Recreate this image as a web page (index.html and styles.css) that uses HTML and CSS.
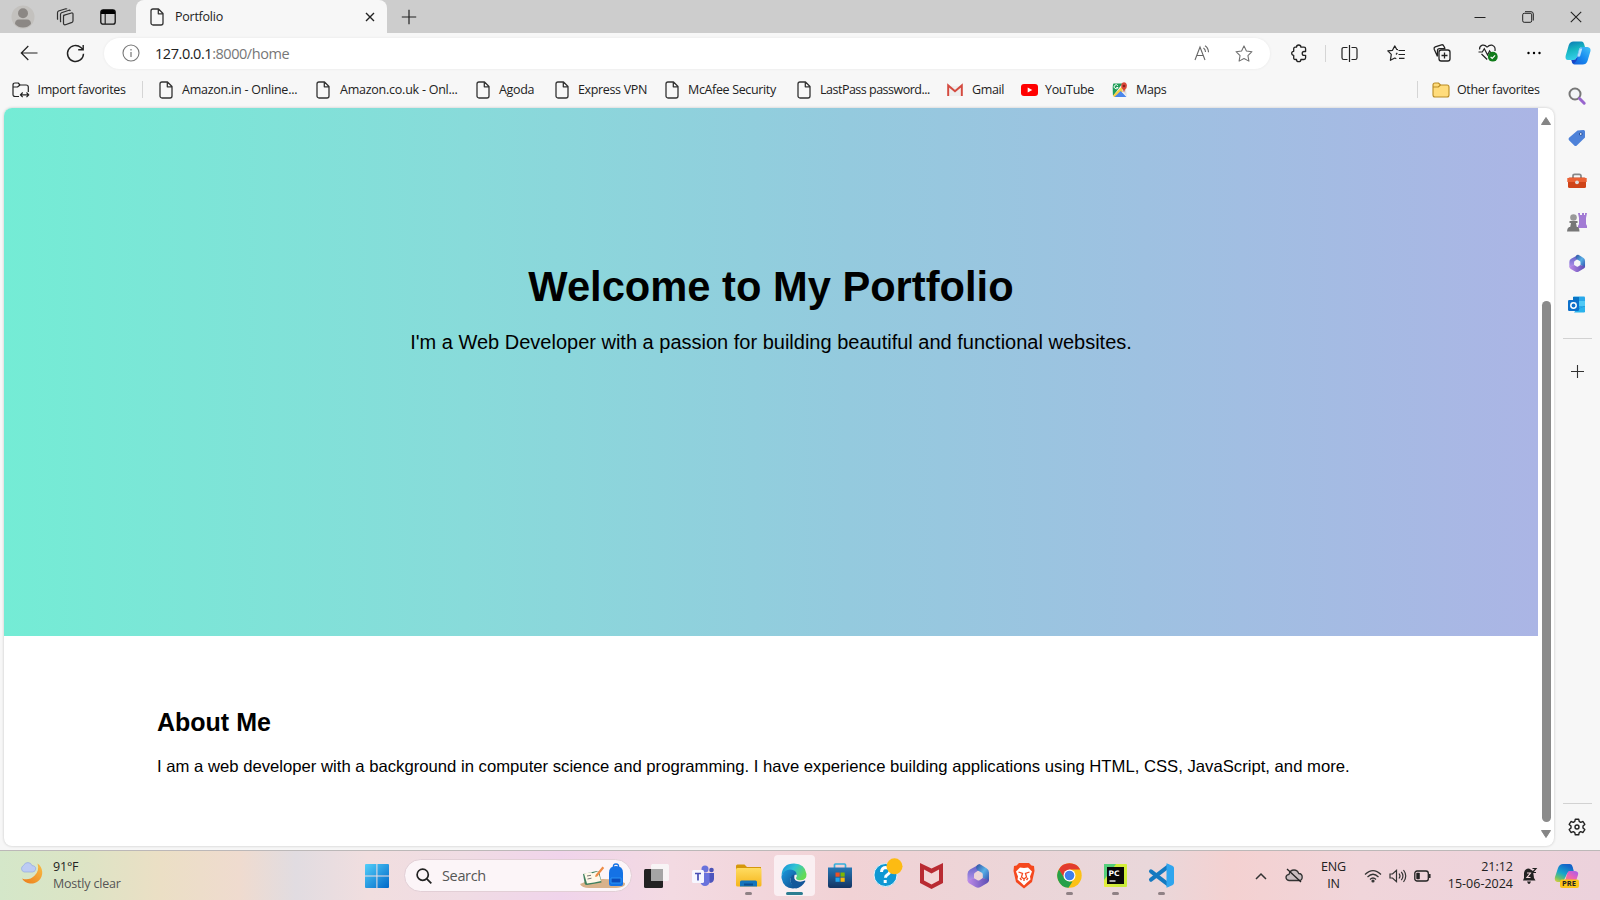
FILE: index.html
```html
<!DOCTYPE html>
<html lang="en">
<head>
<meta charset="utf-8">
<title>Portfolio</title>
<link rel="stylesheet" href="styles.css">
</head>
<body>
<svg class="defs" aria-hidden="true">
  <defs>
    <symbol id="page" viewBox="0 0 14 18"><path d="M3 1H8.5L13 5.5V15a2 2 0 0 1-2 2H3a2 2 0 0 1-2-2V3a2 2 0 0 1 2-2ZM8.3 1V5.8H13" fill="none" stroke="#333" stroke-width="1.3" stroke-linejoin="round"/></symbol>
    <linearGradient id="gWin" x1="0" y1="0" x2="1" y2="1"><stop offset="0" stop-color="#52cffa"/><stop offset="1" stop-color="#0067c8"/></linearGradient>
    <linearGradient id="gCopA" x1="0" y1="0" x2="0.3" y2="1"><stop offset="0" stop-color="#0b75b5"/><stop offset=".5" stop-color="#16b5c0"/><stop offset="1" stop-color="#35cfe8"/></linearGradient>
    <linearGradient id="gCopB" x1="1" y1="0" x2="0" y2="1"><stop offset="0" stop-color="#45c4f8"/><stop offset=".5" stop-color="#188bf0"/><stop offset="1" stop-color="#1559d8"/></linearGradient>
    <linearGradient id="gPreA" x1=".5" y1="0" x2="0" y2="1"><stop offset="0" stop-color="#1465c9"/><stop offset=".45" stop-color="#16a5cc"/><stop offset=".75" stop-color="#6cc26a"/><stop offset="1" stop-color="#f2cf32"/></linearGradient>
    <linearGradient id="gPreB" x1="1" y1="0" x2="0" y2="1"><stop offset="0" stop-color="#a35cf0"/><stop offset=".5" stop-color="#eb62b5"/><stop offset="1" stop-color="#fa8a5a"/></linearGradient>
    <linearGradient id="gM1" x1="0" y1="0" x2="0" y2="1"><stop offset="0" stop-color="#5c5fc4"/><stop offset="1" stop-color="#b492ea"/></linearGradient>
    <linearGradient id="gM2" x1="0" y1="0" x2="1" y2="1"><stop offset="0" stop-color="#2f4b9e"/><stop offset=".5" stop-color="#58b0e6"/><stop offset="1" stop-color="#3350ad"/></linearGradient>
    <linearGradient id="gM3" x1="0" y1="0" x2="1" y2="0"><stop offset="0" stop-color="#c08be8"/><stop offset="1" stop-color="#5a4db4"/></linearGradient>
    <linearGradient id="gMoon" x1="1" y1="0" x2="0" y2="1"><stop offset="0" stop-color="#f8bd45"/><stop offset="1" stop-color="#ec7c1a"/></linearGradient>
    <linearGradient id="gEdge" x1="0" y1="0" x2="1" y2=".5"><stop offset="0" stop-color="#1688d8"/><stop offset=".5" stop-color="#30c3d5"/><stop offset="1" stop-color="#64da55"/></linearGradient>
    <linearGradient id="gEdgeB" x1="0" y1="0" x2="1" y2="1"><stop offset="0" stop-color="#1a9be0"/><stop offset="1" stop-color="#114a8b"/></linearGradient>
    <linearGradient id="gStore" x1="0" y1="0" x2="0" y2="1"><stop offset="0" stop-color="#2677b5"/><stop offset="1" stop-color="#143462"/></linearGradient>
    <linearGradient id="gFolder" x1="0" y1="0" x2="0" y2="1"><stop offset="0" stop-color="#ffdc61"/><stop offset="1" stop-color="#f5b51b"/></linearGradient>
    <linearGradient id="gPc" x1="1" y1="0" x2="0" y2="1"><stop offset="0" stop-color="#d5ef38"/><stop offset=".6" stop-color="#c6ea3a"/><stop offset="1" stop-color="#e9ef3e"/></linearGradient>
    <symbol id="m365" viewBox="0 0 24 26">
      <path d="M14 1 4 6.500Q1.500 8 1.500 11v7L8 15.500V11.500q0-1.200 1-1.800L13 7Z" fill="url(#gM1)"/>
      <path d="M10.500 3Q12 .3 14.500 1.500l6 3.700Q23 6.800 23 9.500V18l-6.200-3V11.500q0-1.300-1-1.800L11 7Q9.500 5 10.500 3Z" fill="url(#gM2)"/>
      <path d="M1.500 17.500 8 15.200l3.500 2q1 .6 2 0l3.300-2.200L23 17q0 2-1.700 3L14.500 24q-2.500 1.500-5 0L3.500 20.500Q1.700 19.300 1.500 17.500Z" fill="url(#gM3)"/>
    </symbol>
  </defs>
</svg>

<div class="screen">
  <header class="tabstrip">
    <div class="strip-left">
      <svg width="24" height="24" viewBox="0 0 24 24"><circle cx="12" cy="12" r="11.500" fill="#c3c1be"/><circle cx="12" cy="8.300" r="5" fill="#8b8784"/><path d="M4 19q0-4.500 4-4.500h8q4 0 4 4.500-3.200 3.500-8 3.500T4 19Z" fill="#8b8784"/></svg>
      <svg width="18" height="18" viewBox="0 0 18 18" fill="none" stroke="#303030" stroke-width="1.200" stroke-linejoin="round"><path d="M7.500 7.300 15.500 5q1.500-.3 1.500 1.200v6.500q0 1.200-1 1.700l-6.500 2.300q-2 .5-2-1.400V8.600q0-1 1-1.500ZM5 14l-.5-.5V6.500q0-1.300 1-1.800L13 2.200q1-.2 1.300.8M2 11.500 1.500 11V4.800q0-1.300 1-1.800L9.800.8q.9-.2 1.200.5"/></svg>
      <svg width="16" height="16" viewBox="0 0 16 16"><rect x=".8" y=".8" width="14.400" height="14.400" rx="2.300" fill="none" stroke="#111" stroke-width="1.300"/><path d="M1 5V3q0-2.300 2.200-2.300h9.600Q15 .7 15 3v2Z" fill="#000"/><path d="M5.200 5v10" stroke="#222" stroke-width="1.200"/></svg>
    </div>
    <div class="tab">
      <svg width="14" height="18"><use href="#page"/></svg>
      <span class="tab-title">Portfolio</span>
      <svg width="10" height="10" viewBox="0 0 10 10"><path d="m1 1 8 8M9 1 1 9" stroke="#222" stroke-width="1.400"/></svg>
    </div>
    <svg class="newtab" width="16" height="16" viewBox="0 0 16 16"><path d="M8 .8v14.400M.8 8h14.400" stroke="#222" stroke-width="1.200"/></svg>
    <div class="window-buttons">
      <svg width="12" height="12" viewBox="0 0 12 12"><path d="M.5 6.500h11" stroke="#222"/></svg>
      <svg width="12" height="12" viewBox="0 0 12 12" fill="none" stroke="#222"><rect x=".7" y="2.300" width="9" height="9" rx="1.500"/><path d="M3 .7h6q2.300 0 2.300 2.300v6.500"/></svg>
      <svg width="12" height="12" viewBox="0 0 12 12"><path d="m.8.8 10.400 10.400M11.200.8.8 11.200" stroke="#222" stroke-width="1.100"/></svg>
    </div>
  </header>

  <nav class="toolbar">
    <svg width="18" height="16" viewBox="0 0 18 16"><path d="M17.500 8H1.500M8.300 1 1.300 8l7 7" fill="none" stroke="#222" stroke-width="1.200"/></svg>
    <svg class="reload" width="19" height="19" viewBox="0 0 19 19"><path d="M17.500 9.700A8 8 0 1 1 14.900 3.600L17 5.500M17.200 1v4.800h-5" fill="none" stroke="#222" stroke-width="1.400"/></svg>
    <div class="address">
      <svg width="18" height="18" viewBox="0 0 18 18"><circle cx="9" cy="9" r="8" fill="none" stroke="#777" stroke-width="1.100"/><path d="M9 8v5M9 5v1.400" stroke="#777" stroke-width="1.200"/></svg>
      <span class="url"><b>127.0.0.1</b>:8000/home</span>
      <svg width="17" height="16" viewBox="0 0 17 16" fill="none" stroke="#666" stroke-width="1.100"><path d="M1 15 6 2l5 13M2.700 10.500h6.600M9.500 3q2 1.500 2 4M11 .8q3.300 2 3.500 6.500"/></svg>
      <svg width="18" height="17" viewBox="0 0 20 19"><path d="m10 1 2.700 5.700 6.200.8-4.500 4.300 1.100 6.200L10 15l-5.500 3 1.100-6.200L1.100 7.500l6.200-.8Z" fill="none" stroke="#707070" stroke-width="1.200" stroke-linejoin="round"/></svg>
    </div>
    <svg class="extensions" width="17" height="18" viewBox="0 0 17 18"><path d="M5.500 3.200a2.200 2.200 0 0 1 4.400 0H13q1.600 0 1.600 1.600v2.700h-1.500a1.900 1.900 0 0 0 0 3.800h1.500v2.500q0 1.700-1.600 1.700H9.900a2.200 2.200 0 0 1-4.400 0H4.200q-1.500 0-1.500-1.500v-2.700a2 2 0 0 1 0-4V4.900q0-1.700 1.500-1.700Z" fill="none" stroke="#222" stroke-width="1.300" stroke-linejoin="round"/></svg>
    <i class="rule"></i>
    <svg width="17" height="17" viewBox="0 0 17 17"><path d="M6.500 2.500H2.800Q1 2.500 1 4.300v8.400q0 1.800 1.800 1.800h3.700M10.500 2.500h3.700q1.800 0 1.800 1.800v8.400q0 1.800-1.800 1.800h-3.700M8.500 0v17" fill="none" stroke="#222" stroke-width="1.200"/></svg>
    <svg width="18" height="17" viewBox="0 0 18 17"><path d="M11 4.700 9.800 4.500 7.700.9 5.500 5.300l-4.700.6 3.500 3.500-.9 5.900 4.400-2.300 1.500.7M9 9.500l1.300-1.600M11.500 5.500H18M11.500 9.500H18M12 13.300h5.500" fill="none" stroke="#222" stroke-width="1.200" stroke-linejoin="round"/></svg>
    <svg width="18" height="18" viewBox="0 0 18 18" fill="none" stroke="#222" stroke-width="1.300"><rect x="6" y="6" width="11" height="11" rx="2.200"/><path d="M11.500 8.500v6M8.500 11.500h6M4.500 12.500 1.200 5.300q-.6-1.700 1-2.400L8.500.9q1.700-.5 2.300 1.100L12 4.500M4.500 12V6.700q0-2 2-2h6"/></svg>
    <svg width="20" height="18" viewBox="0 0 20 18" fill="none" stroke="#222" stroke-width="1.200"><path d="M9 3.200Q7 .5 4.300 1.200 1.500 2 1.500 5.500M9.200 3.200q2.200-2.700 5-2Q17.800 2.500 17 7M3.500 10l5.700 5.500M.5 8h3.800l2-3.300 3.300 6.300 2-4 1.400 2"/><circle cx="14.800" cy="12.700" r="4.900" fill="#107c1a" stroke="none"/><path d="m12.600 12.800 1.600 1.600 2.900-3" stroke="#fff"/></svg>
    <svg width="14" height="4" viewBox="0 0 14 4"><circle cx="1.500" cy="2" r="1.200"/><circle cx="7" cy="2" r="1.200"/><circle cx="12.500" cy="2" r="1.200"/></svg>
    <svg width="26" height="24" viewBox="0 0 26 24"><path d="M8.500.5h8q1.800 0 2.500 2.200l1 3.300h-3q-2.400 0-3 2.500l-2.300 8.200q-.7 2.300-3 2.300H3Q.1 19 .6 15L3.800 4Q5 .5 8.500.5Z" fill="url(#gCopA)"/><path d="M17.500 23.500h-8q-1.800 0-2.500-2L6.500 19h2.200q2.400 0 3-2.300L14 8.500Q14.800 6 17 6h5.500q3.500.5 3 4l-3 10q-1.200 3.500-5 3.500Z" fill="url(#gCopB)"/><path d="M11.700 16.700q-.6 2.300-3 2.300H6.500l.7 2.300q.5 1.500 2.300.7 1.800-.8 3-5Z" fill="#1845c5"/><path d="m14.600 7.500-2.300 8.200 2.700-.2 2.300-8Z" fill="#dff6ff" opacity=".8"/></svg>
  </nav>

  <nav class="bookmarks">
    <svg width="18" height="16" viewBox="0 0 18 16"><path d="M7 14.500H3.200Q1 14.500 1 12.500V3q0-2 2-2h3.200L8 3h6q2.300 0 2.300 2v5M1 5h4.500L8 3M8.500 12.800h8M10.700 10.500l-2.300 2.300 2.300 2.300M14.500 10.500l2.300 2.300-2.300 2.300" fill="none" stroke="#222" stroke-width="1.200" stroke-linejoin="round"/></svg>
    <span>Import favorites</span><i class="rule"></i>
    <svg width="14" height="18"><use href="#page"/></svg><span class="loose">Amazon.in - Online...</span>
    <svg width="14" height="18"><use href="#page"/></svg><span class="loose">Amazon.co.uk - Onl...</span>
    <svg width="14" height="18"><use href="#page"/></svg><span>Agoda</span>
    <svg width="14" height="18"><use href="#page"/></svg><span>Express VPN</span>
    <svg width="14" height="18"><use href="#page"/></svg><span>McAfee Security</span>
    <svg width="14" height="18"><use href="#page"/></svg><span class="tight">LastPass password...</span>
    <svg width="16" height="12" viewBox="0 0 16 12"><path d="M3 2h10v10H3Z" fill="#eee"/><path d="M1.200 12V1.500L8 7.200l6.800-5.700V12" fill="none" stroke="#d44b40" stroke-width="2"/></svg><span>Gmail</span>
    <svg width="17" height="12" viewBox="0 0 17 12"><rect width="17" height="12" rx="3" fill="#f00"/><path d="m6.700 3.500 4.600 2.500-4.600 2.500Z" fill="#fff"/></svg><span>YouTube</span>
    <svg width="16" height="16" viewBox="0 0 16 16"><path d="M1.500 1.500h9L1 14Q.2 2 1.500 1.500Z" fill="#1f9e58"/><path d="m1 13.500 12-12 1.500 5L4 15H2Z" fill="#f7ce45"/><path d="m2.500 15 6.200-6 5.800 6Z" fill="#4b86ec"/><path d="m9.700 8 4-3 1 9Z" fill="#ddd"/><path d="M12 10.500Q11.700 8 9.500 5.800 8.300 1 12 .3q3.900.7 2.600 5.200-2.200 2.500-2.600 5Z" fill="#d94639"/><circle cx="12" cy="4" r="1.300" fill="#8d211a"/><path d="M5.800 3.700A2 2 0 1 0 6 5.500H4.300" fill="none" stroke="#fff"/></svg><span>Maps</span>
    <i class="rule"></i>
    <svg width="18" height="16" viewBox="0 0 18 16"><path d="M1 3q0-2 2-2h3.500L8.500 3H15q2 0 2 2v8q0 2-2 2H3q-2 0-2-2Z" fill="#ffdc7c" stroke="#b98b24" stroke-width="1.100"/><path d="M1 5h5.300l2.200-2" fill="none" stroke="#b98b24" stroke-width="1.100"/></svg><span>Other favorites</span>
  </nav>

  <div class="body">
    <div class="viewport">
      <main class="page">
        <section class="hero"><h1>Welcome to My Portfolio</h1><p>I'm a Web Developer with a passion for building beautiful and functional websites.</p></section>
        <section class="about"><h2>About Me</h2><p>I am a web developer with a background in computer science and programming. I have experience building applications using HTML, CSS, JavaScript, and more.</p></section>
      </main>
      <div class="scrollbar">
        <svg width="10" height="8" viewBox="0 0 10 8"><path d="M5 .5 9.500 7.500H.5Z" fill="#858585" stroke="#858585" stroke-linejoin="round"/></svg>
        <div class="thumb"></div>
        <svg width="10" height="8" viewBox="0 0 10 8"><path d="M5 7.500 9.500.5H.5Z" fill="#858585" stroke="#858585" stroke-linejoin="round"/></svg>
      </div>
    </div>
    <aside class="sidebar">
      <svg width="18" height="18" viewBox="0 0 18 18"><circle cx="7" cy="7" r="5.500" fill="#f2f5f7" stroke="#777" stroke-width="2"/><path d="m11.500 11.500 4.700 4.700" stroke="#9865ce" stroke-width="3" stroke-linecap="round"/></svg>
      <svg width="18" height="18" viewBox="0 0 18 18"><path d="m9.500 1.500 5.800-.6q1.700-.2 1.700 1.500v6.200L8.800 16.500q-1.300 1-2.500 0L1 11.200q-1-1.200 0-2.400Z" fill="#4e82d9"/><circle cx="12.800" cy="5" r="1.400" fill="#fff" stroke="#2451a0"/></svg>
      <svg width="20" height="16" viewBox="0 0 20 16"><path d="M6 5V3q0-1.700 1.700-1.700h4.600Q14 1.300 14 3v2" fill="none" stroke="#888" stroke-width="1.700"/><rect x="1" y="4.500" width="18" height="10.500" rx="1.500" fill="#cf4419"/><path d="M.3 5h19.400v4H.3Z" fill="#eb6134"/><circle cx="10" cy="9.300" r="1.900" fill="#ddd"/></svg>
      <svg width="20" height="19" viewBox="0 0 20 19"><path d="M11 0h2v2h2V0h2v2h1V0h2l-1 5v6l1 2v2h-9V13l1-2V5Z" fill="#a27bd4"/><circle cx="6.500" cy="4.500" r="3.300" fill="#999"/><path d="M2.500 8h8v2H9l.8 4H11q1.500 1 1.500 4.500H0Q0 15 2 14h1.200L4 10H2.500Z" fill="#777"/></svg>
      <svg width="18" height="19"><use href="#m365"/></svg>
      <svg width="18" height="18" viewBox="0 0 18 18"><rect x="5" y=".5" width="12" height="14" rx="1" fill="#28a8ea"/><path d="M5 1h6v7H5Z" fill="#0874c5"/><path d="M11 5h6v5h-6Z" fill="#50c9f5"/><path d="M5 9 17 16V10l-6 3Z" fill="#144c85"/><path d="M6 16.500h10q1 0 1-1.500V10l-9 4Z" fill="#29b3ed"/><rect y="4" width="11" height="11" rx="1.200" fill="#0d70ca"/><circle cx="5.500" cy="9.500" r="2.700" fill="none" stroke="#fff" stroke-width="1.500"/></svg>
      <i class="hr"></i>
      <svg width="13" height="13" viewBox="0 0 13 13"><path d="M6.500 0v13M0 6.500h13" stroke="#333" stroke-width="1.100"/></svg>
      <i class="hr hr-low"></i>
      <svg width="18" height="18" viewBox="0 0 18 18" fill="none" stroke="#222" stroke-width="1.400"><path d="m7.300 1.200-.5 2.200-1.500.9-2.300-.8L1.200 6.400 3 8.100v1.800l-1.800 1.700L3 14.500l2.300-.8 1.500.9.500 2.200h3.400l.5-2.200 1.500-.9 2.300.8 1.800-2.900L15 9.900V8.100l1.800-1.700L15 3.500l-2.300.8-1.500-.9-.5-2.200Z" stroke-linejoin="round"/><circle cx="9" cy="9" r="2"/></svg>
    </aside>
  </div>

  <footer class="taskbar">
    <div class="weather">
      <svg width="24" height="24" viewBox="0 0 24 24"><path d="M17.500 1.500A11 11 0 1 1 2 16.500 12 12 0 0 0 17.500 1.500Z" fill="url(#gMoon)"/><path d="M4 10a3.500 3.500 0 0 1-.5-6.500Q5 .3 8 .6q3 0 4 3 4 .3 3.700 3.500Q15.200 10 12.500 10Z" fill="#bccbf3" stroke="#92a9e2" stroke-width=".7"/></svg>
      <div><span>91°F</span><span class="soft">Mostly clear</span></div>
    </div>
    <svg width="24" height="24" viewBox="0 0 24 24"><path d="M0 1q0-1 1-1h10.400v11.400H0ZM12.400 0H23q1 0 1 1v10.400H12.400ZM0 12.400h11.400V24H1q-1 0-1-1ZM12.400 12.400H24V23q0 1-1 1H12.400Z" fill="url(#gWin)"/></svg>
    <div class="search">
      <svg width="16" height="16" viewBox="0 0 16 16"><circle cx="6.700" cy="6.700" r="5.600" fill="none" stroke="#222" stroke-width="1.700"/><path d="m10.800 10.800 4.500 4.500" stroke="#222" stroke-width="1.800"/></svg>
      <span>Search</span>
      <svg width="47" height="26" viewBox="0 0 47 26"><path d="M1 21Q12 16 24 16t22 4q1 5-12 5H10Q3 25 1 21Z" fill="#d8b28b"/><path d="M4 11 18 8q2 0 2.500 2l2 9.500L8 22q-2 0-2.300-1.500Z" fill="#3f7f5d"/><path d="m5 10.500 7-1.200 1.500 1 5.500-2L22 18l-7 1.500-7 1Z" fill="#fff8e9"/><path d="m8 13 4-.7M8.500 16l4-.8" stroke="#777"/><path d="m16.500 12 7-8.500 1.700 1.500-7 8.500-2 .5Z" fill="#ee8b46"/><path d="M30 10q0-7 7-7t7 7v11q0 2-2 2H32q-2 0-2-2Z" fill="#1472e5"/><path d="M34.500 4Q34 1 37 1t2.500 3" fill="none" stroke="#1472e5" stroke-width="1.300"/><path d="M32 15h10v5H32Z" fill="#0c4dbb" stroke="#2a95f5"/></svg>
    </div>
    <div class="apps">
      <div class="app"><svg width="26" height="24" viewBox="0 0 26 24"><rect y="5" width="19" height="19" rx="1.500" fill="#222"/><rect x="7" width="18" height="17" rx="1.500" fill="#f8f8f8" opacity=".85"/><path d="M7 5h12v12H7Z" fill="#a5a5a5"/></svg></div>
      <div class="app"><svg width="24" height="22" viewBox="0 0 24 22"><circle cx="14" cy="4" r="3.500" fill="#6871dc"/><circle cx="20.500" cy="5" r="2.300" fill="#4b52b5"/><path d="M9 8h10v8q-1 5-5 5-4 0-5-5Z" fill="#6972dc"/><path d="M18.500 8H23v6q-.5 4-4.500 4Z" fill="#4d55bd"/><rect x="1" y="5" width="12" height="13" rx="1.500" fill="#f6f7ff"/><path d="M4 8.500h6M7 8.500v7" stroke="#474eb5" stroke-width="1.700"/></svg></div>
      <div class="app run"><svg width="26" height="23" viewBox="0 0 26 23"><path d="M0 2Q0 .5 1.500.5h7L11 3H25v5H0Z" fill="#d5970c"/><rect y="4" width="25.500" height="18.500" rx="1.500" fill="url(#gFolder)"/><path d="M4 22.500V18q0-1.500 1.500-1.500h14q1.500 0 1.500 1.500v4.500Z" fill="#1475bd"/><path d="M8 19.500h9v2H8Z" fill="#0b4e90"/></svg></div>
      <div class="app run active"><svg width="26" height="26" viewBox="0 0 26 26"><path d="M.5 12Q1.500.5 13 .5 24 .5 25.500 11q.2 6-5.500 6.300-5 0-5-2.300 1.700-2.200.2-4.500Q11 5.500.5 12Z" fill="url(#gEdge)"/><path d="M.5 12.800Q4 5.500 11 6.800q4.500 1 4.700 5-4.500-1-6.200 4Q9 22 16 25 3 27.500.5 15Z" fill="url(#gEdgeB)"/><path d="M9.500 14.500q1-2.700 4.300-3.300-2 4.800 2 6.800 4 1.500 8-.4.900 0 .4 1Q20.500 25 15 25.500 8.500 22 9.500 14.500Z" fill="#14579a"/></svg></div>
      <div class="app"><svg width="24" height="26" viewBox="0 0 24 26"><path d="M6.500 5V2q0-1 1-1h9q1 0 1 1v3" fill="none" stroke="#34afdc" stroke-width="1.700"/><path d="M0 4.500h24V23q0 2-2 2H2q-2 0-2-2Z" fill="url(#gStore)"/><path d="M7.500 9.500h4.200v4.200H7.500Z" fill="#ef5123"/><path d="M12.500 9.500h4.200v4.200h-4.200Z" fill="#7db700"/><path d="M7.500 14.600h4.200v4.200H7.500Z" fill="#21a4ed"/><path d="M12.500 14.600h4.200v4.200h-4.200Z" fill="#fdb809"/></svg></div>
      <div class="app"><svg class="help" width="30" height="30" viewBox="0 0 30 30"><circle cx="12.500" cy="17" r="11.500" fill="#0f98d3" stroke="#dff3fb"/><path d="M8.500 14q.3-4.500 4.500-4.500 4.500.3 4 4-.5 2-2.700 3.300-1.800 1-1.800 3M12.200 22v3" fill="none" stroke="#fff" stroke-width="3"/><circle cx="21.500" cy="8.300" r="8" fill="#fdbb13"/></svg></div>
      <div class="app"><svg width="23" height="26" viewBox="0 0 23 26"><path d="m0 0 11.500 5.500L23 0v20l-11.500 6L0 20Z" fill="#b92b32"/><path d="m4 6.500 7.500 4L19 6.500v11l-7.500 4-7.500-4Z" fill="#f3d6d7"/></svg></div>
      <div class="app"><svg width="24" height="26"><use href="#m365"/></svg></div>
      <div class="app"><svg width="22" height="26" viewBox="0 0 22 26"><path d="M6 0h10l2.500 2.500L21 3l.5 5-2.500 11-8 6.500L3 19 .5 8 1 3l2.500-.5Z" fill="#f5481e"/><path d="M7 4.500 11 5l4-.5 4 4-2 5 .5 3-4 3.500L11 22.500 8.500 20l-4-3.500.5-3-2-5Z" fill="#fff"/><path d="m5.500 9 4 1.500-1 3.500 2.500 2 2.500-2-1-3.500 4-1.500M11 16v2M7 15l1.500 2M15 15l-1.500 2" fill="none" stroke="#f5481e" stroke-width="1.300"/></svg></div>
      <div class="app run"><svg width="25" height="25" viewBox="0 0 25 25"><circle cx="12.500" cy="12.500" r="12.200" fill="#fbc116"/><path d="M1.900 6.500Q5 .3 12.500.3 20 .3 23.200 6.500H12.500L7 15.500Z" fill="#e23b2e"/><path d="M1.900 6.500 7.500 15.500 12.500 18.500h3l-4 6.200Q4 24.500 1 17-1 11.500 1.900 6.500Z" fill="#26a049"/><circle cx="12.500" cy="12.500" r="6" fill="#fff"/><circle cx="12.500" cy="12.500" r="4.800" fill="#3f7fec"/></svg></div>
      <div class="app run"><svg width="23" height="23" viewBox="0 0 23 23"><rect width="23" height="23" rx="1" fill="url(#gPc)"/><path d="M0 0h12L0 16Z" fill="#55cf7b"/><rect x="3" y="3" width="17" height="17" fill="#080808"/><text x="4.500" y="12.300" class="pc">PC</text><path d="M5.500 17h6" stroke="#fff" stroke-width="1.300"/></svg></div>
      <div class="app run"><svg width="25" height="25" viewBox="0 0 25 25"><path d="m2 8.300 17 13M2 16.700l17-13" stroke="#1479c0" stroke-width="4" stroke-linecap="round"/><path d="m17.500.3 5.800 2.400Q25 3.500 25 5v15q0 1.500-1.700 2.300l-5.800 2.400Z" fill="#2fa5ee"/></svg></div>
    </div>
    <div class="tray">
      <svg width="12" height="8" viewBox="0 0 12 8"><path d="m1 7 5-5 5 5" fill="none" stroke="#333" stroke-width="1.500"/></svg>
      <svg width="18" height="15" viewBox="0 0 18 15"><path d="M4 12.500q-3-.5-3-3.200 0-2.500 3-3Q5 2 9 2q3.500 0 4.700 3.500 3.500.2 3.500 3.500 0 3.500-3.200 3.500Z" fill="#c9bdc0" stroke="#333" stroke-width="1.300"/><path d="m2 1 14 13" stroke="#222" stroke-width="1.300"/></svg>
      <div class="lang"><span>ENG</span><span>IN</span></div>
      <svg width="18" height="14" viewBox="0 0 18 14" fill="none" stroke="#333" stroke-width="1.200"><path d="M1 5.500Q9-2.500 17 5.500M3.500 8Q9 2.500 14.500 8M6 10.500q3-3 6 0"/><circle cx="9" cy="12" r="1" fill="#333"/></svg>
      <svg width="18" height="14" viewBox="0 0 18 14" fill="none" stroke="#333" stroke-width="1.200"><path d="M1 5h2.500L7.500 1.300v11.400L3.500 9H1ZM10 4.500q2 2.500 0 5M12.300 2.800q3.300 4.200 0 8.400M14.500 1q4.500 6 0 12"/></svg>
      <svg width="17" height="12" viewBox="0 0 17 12"><rect x=".8" y="1" width="13.500" height="10" rx="2.300" fill="none" stroke="#222" stroke-width="1.300"/><rect x="2.300" y="2.800" width="3.500" height="6.400" rx=".7" fill="#222"/><path d="M15.800 4v4" stroke="#222" stroke-width="1.500"/></svg>
      <div class="clock"><span>21:12</span><span>15-06-2024</span></div>
      <svg width="15" height="17" viewBox="0 0 15 17"><path d="M1 13.500 2 11V6q.5-4.500 5-4.500L11 4l1 7 1.500 2.500ZM5 14.500h4q-1 2.500-2 2.500t-2-2.500Z" fill="#222"/><path d="M5 6h3.500L5 10.500h3.500" stroke="#f2d5d9" fill="none" stroke-width="1.200"/><path d="M10.500 1.500h3.500l-3.500 4h3.500" stroke="#222" fill="none" stroke-width="1.200"/></svg>
      <svg width="25" height="26" viewBox="0 0 25 26"><path d="M9 1h7q2 0 2.700 3L20 9h-5q-2 .5-3 4l-3 6H3Q0 18 1 14L4 5q1.500-4 5-4Z" fill="url(#gPreA)"/><path d="M15 8h6q4 .5 3 4l-2 6H8.500q3 0 3.500-3Q13 9 15 8Z" fill="url(#gPreB)"/><rect x="6" y="16.500" width="19" height="8.500" rx="2" fill="#fcc419"/><text x="8" y="23.200" class="pre">PRE</text></svg>
    </div>
  </footer>
</div>
</body>
</html>
```

FILE: styles.css
```css
* { box-sizing: border-box; }
body { margin: 0; overflow: hidden; font-family: "Open Sans", "Noto Sans", sans-serif; font-size: 12.5px; color: #222; background: #f7f7f7; }
svg { display: block; flex: none; overflow: visible; }
span { white-space: nowrap; }
.defs { position: absolute; width: 0; height: 0; }
.screen { width: 1600px; height: 900px; display: grid; grid-template-rows: 33px 39px 36px 742px 50px; }

.tabstrip { display: grid; grid-template-columns: 136px 251px 43px 1fr 176px; align-items: center; background: #cdcdcd; }
.strip-left { display: grid; grid-template-columns: 46px 38px 48px; align-items: center; justify-items: center; }
.tab { height: 33px; display: flex; align-items: center; padding: 0 12px 0 14px; background: #f7f7f7; border-radius: 8px 8px 0 0; }
.tab-title { flex: 1; margin-left: 11px; letter-spacing: -.25px; }
.newtab { justify-self: center; }
.window-buttons { grid-column: 5; display: grid; grid-template-columns: 48px 48px 47px; justify-content: end; justify-items: center; padding-right: 1px; }

.toolbar { display: grid; grid-template-columns: 58px 46px 1166px 55px 0 48px 46px 45px 47px 45px 44px; align-items: center; justify-items: center; padding-top: 1px; }
.reload { margin-left: -12px; }
.extensions { margin-left: 4px; }
.address { width: 1166px; height: 31px; display: flex; align-items: center; background: #fff; border-radius: 16px; box-shadow: 0 0 3px #0001; padding: 0 17px 0 18px; }
.url { flex: 1; margin-left: 15px; font-size: 14.5px; letter-spacing: -.45px; color: #777; }
.url b { color: #222; font-weight: 400; }
.address svg:last-child { margin-left: 24px; }
.rule { display: block; width: 1px; height: 17px; background: #d5d5d5; }

.bookmarks { display: grid; align-items: center; padding: 0 0 1px 12px; letter-spacing: -.35px;
  grid-template-columns: 25.5px 104.5px 17px 23px 134px 24px 136px 23px 56px 23px 87px 23px 109px 23px 127px 25px 49px 24px 67px 24px 281px 15px 25px 1fr; }
.loose { letter-spacing: -.24px; }
.tight { letter-spacing: -.5px; }

.body { display: grid; grid-template-columns: 1554px 46px; min-height: 0; }
.viewport { margin: 0 0 4px 4px; display: grid; grid-template-columns: 1534px 16px; background: #fff; border-radius: 8px; overflow: hidden; box-shadow: 0 0 3px #0003; }
.page { font-family: "Liberation Sans", Arial, sans-serif; color: #000; }
.hero { height: 528px; padding-top: 154px; text-align: center; background: linear-gradient(to right, #74ecd5, #88dbda 30%, #94cade 55%, #abb5e5); }
h1 { margin: 0; font-size: 41.67px; line-height: 50px; }
.hero p { margin: 16px 0 0; font-size: 20px; line-height: 28px; }
.about { padding: 70px 0 0 153px; }
h2 { margin: 0; font-size: 25px; line-height: 32px; }
.about p { margin: 17px 0 0; font-size: 16.68px; line-height: 24px; white-space: nowrap; }
.scrollbar { display: flex; flex-direction: column; align-items: center; padding: 9px 0 8px; }
.thumb { width: 9px; height: 521px; margin: auto 0 8px; border-radius: 5px; background: #8b8b8b; }

.sidebar { display: flex; flex-direction: column; align-items: center; height: 763px; margin-top: -21px; padding: 0 0 14px; }
.sidebar svg:nth-child(1) { margin-bottom: 24px; }
.sidebar svg:nth-child(2) { margin-bottom: 26px; }
.sidebar svg:nth-child(3) { margin-bottom: 24px; }
.sidebar svg:nth-child(4) { margin-bottom: 22px; }
.sidebar svg:nth-child(5) { margin-bottom: 23px; }
.hr { width: 29px; height: 1px; background: #d2d2d2; margin: 24px 0 26px; }
.hr-low { margin: auto 0 14px; }

.taskbar { display: grid; grid-template-columns: 365px 39px 230px 550px 416px; align-items: center; border-top: 1px solid #bcb8b8;
  background: linear-gradient(90deg, #d4e7c9, #dce4c5 5%, #ebdfc5 10%, #efdbcf 15%, #e1dce1 18.5%, #f1dedf 23%, #f0dce4 29%, #f0d4eb 35%, #f3dae2 42%, #f1d2d5 53%, #ead6d9 67%, #e9d7da 72%, #f4d1d1 77%, #f0d5da 85%, #ecd2dc); }
.weather { display: flex; align-items: center; gap: 9px; padding-left: 20px; }
.weather svg { margin-top: -4px; }
.weather div, .lang, .clock { display: flex; flex-direction: column; line-height: 16.5px; letter-spacing: -.2px; }
.soft { color: #555; }
.search { width: 228px; height: 33px; display: flex; align-items: center; border-radius: 17px; background: #fcf5f8; border: 1px solid #e2cfd6; padding: 0 5px 0 11px; }
.search span { flex: 1; margin-left: 10px; font-size: 14.5px; letter-spacing: -.35px; color: #555; }
.apps { display: grid; grid-template-columns: repeat(12, 45.83px); height: 49px; align-items: center; }
.app { position: relative; height: 41px; width: 41px; justify-self: center; display: grid; place-items: center; border-radius: 4px; }
.active { background: #faeff2; }
.run::after { content: ""; position: absolute; bottom: 1px; left: 17px; width: 7px; height: 3px; border-radius: 2px; background: #8f8185; }
.active::after { left: 12px; width: 17px; background: #2c7d91; }
.help { margin: -5px 0 0 4px; }
.tray { display: grid; align-items: center; justify-items: center; grid-template-columns: 33px 33px 47px 31px 19px 31px 75px 33px 41px; padding-left: 60px; }
.lang { align-items: center; }
.clock { align-items: flex-end; justify-self: end; }
.tray .clock { letter-spacing: 0; }
.pc { font: bold 7.5px "DejaVu Sans", sans-serif; fill: #fff; }
.pre { font: bold 7.5px "Open Sans", sans-serif; fill: #222; }
```
